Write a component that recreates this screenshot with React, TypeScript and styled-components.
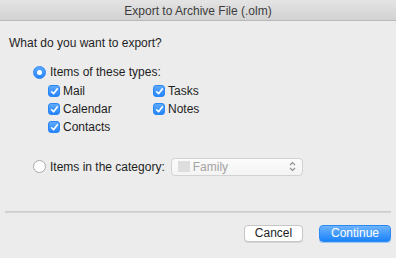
import React from "react";
import styled, { createGlobalStyle } from "styled-components";

const Global = createGlobalStyle`
  html, body { margin: 0; padding: 0; background: #ececec; }
  * { box-sizing: border-box; }
`;

const Window = styled.div`
  width: 396px;
  height: 258px;
  background: #ececec;
  font-family: "Liberation Sans", Arial, sans-serif;
  font-size: 12px;
  color: #1e1e1e;
  display: flex;
  flex-direction: column;
  overflow: hidden;
`;

const TitleBar = styled.div`
  height: 21px;
  flex: none;
  background: linear-gradient(#e4e4e4, #d2d2d2);
  border-bottom: 1px solid #b9b9b9;
  display: flex;
  align-items: center;
  justify-content: center;
  color: #3c3c3c;
  font-size: 12px;
  padding-top: 1px;
`;

const Body = styled.div`
  flex: 1;
  display: flex;
  flex-direction: column;
  padding: 15px 0 0 9px;
`;

const Question = styled.div`
  line-height: 15px;
  height: 15px;
`;

const Row = styled.div<{ $indent: number; $mt: number }>`
  display: flex;
  align-items: center;
  height: 16px;
  margin-left: ${(p) => p.$indent}px;
  margin-top: ${(p) => p.$mt}px;
  gap: 4px;
`;

const RadioDot = styled.span<{ $on?: boolean }>`
  width: 13px;
  height: 13px;
  border-radius: 50%;
  flex: none;
  display: flex;
  align-items: center;
  justify-content: center;
  background: ${(p) => (p.$on ? "linear-gradient(#5eaaff, #2684fb)" : "#ffffff")};
  border: 1px solid ${(p) => (p.$on ? "#2a86f5" : "#a9a9a9")};
  &::after {
    content: "";
    display: ${(p) => (p.$on ? "block" : "none")};
    width: 5px;
    height: 5px;
    border-radius: 50%;
    background: #ffffff;
  }
`;

const Columns = styled.div`
  display: flex;
  margin-left: 39px;
  margin-top: 3px;
`;

const Column = styled.div<{ $w: number }>`
  width: ${(p) => p.$w}px;
  display: flex;
  flex-direction: column;
  gap: 1.5px;
`;

const CheckRow = styled.div`
  display: flex;
  align-items: center;
  gap: 3px;
  height: 16.5px;
`;

const CheckBox = styled.span`
  width: 12px;
  height: 12px;
  border-radius: 3px;
  flex: none;
  background: linear-gradient(#5eaaff, #2684fb);
  border: 1px solid #2a86f5;
  display: flex;
  align-items: center;
  justify-content: center;
`;

const Popup = styled.div`
  margin-left: 2px;
  width: 132px;
  height: 18px;
  border: 1px solid #d2d2d2;
  border-radius: 4px;
  background: linear-gradient(#fbfbfb, #f3f3f3);
  display: flex;
  align-items: center;
  padding: 0 6px 0 6px;
  gap: 3px;
  color: #a3a3a3;
`;

const Swatch = styled.span`
  width: 12px;
  height: 11px;
  background: #dedede;
  flex: none;
`;

const PopupText = styled.span`
  flex: 1;
`;

const Separator = styled.div`
  margin: 36px 5px 0 -4px;
  height: 2px;
  background: linear-gradient(#c9c9c9, #d9d9d9);
`;

const Footer = styled.div`
  display: flex;
  justify-content: flex-end;
  gap: 16px;
  margin: 12px 5px 0 0;
`;

const Button = styled.button<{ $primary?: boolean }>`
  font-family: inherit;
  font-size: 12px;
  height: 17px;
  padding: 0;
  border-radius: 4px;
  width: ${(p) => (p.$primary ? 72 : 59)}px;
  color: ${(p) => (p.$primary ? "#ffffff" : "#1e1e1e")};
  background: ${(p) => (p.$primary ? "linear-gradient(#6cb3fb, #1c83fb)" : "#ffffff")};
  border: 1px solid ${(p) => (p.$primary ? "#2c89f4" : "#c6c6c6")};
  box-shadow: 0 1px 0 ${(p) => (p.$primary ? "#9cc6f3" : "#d6d6d6")};
  line-height: 15px;
`;

const Check = () => (
  <svg width="9" height="9" viewBox="0 0 9 9">
    <path d="M1.6 4.8 L3.6 6.8 L7.4 1.8" fill="none" stroke="#fff" strokeWidth="1.6" strokeLinecap="round" strokeLinejoin="round" />
  </svg>
);

const Chevrons = () => (
  <svg width="7" height="11" viewBox="0 0 7 11">
    <path d="M1 4 L3.5 1.5 L6 4 M1 7 L3.5 9.5 L6 7" fill="none" stroke="#8e8e8e" strokeWidth="1.1" />
  </svg>
);

const Item = ({ label }: { label: string }) => (
  <CheckRow>
    <CheckBox>
      <Check />
    </CheckBox>
    <span>{label}</span>
  </CheckRow>
);

export default function App() {
  return (
    <>
      <Global />
      <Window>
        <TitleBar>Export to Archive File (.olm)</TitleBar>
        <Body>
          <Question>What do you want to export?</Question>
          <Row $indent={24} $mt={13}>
            <RadioDot $on />
            <span>Items of these types:</span>
          </Row>
          <Columns>
            <Column $w={105}>
              <Item label="Mail" />
              <Item label="Calendar" />
              <Item label="Contacts" />
            </Column>
            <Column $w={80}>
              <Item label="Tasks" />
              <Item label="Notes" />
            </Column>
          </Columns>
          <Row $indent={24} $mt={23}>
            <RadioDot />
            <span>Items in the category:</span>
            <Popup>
              <Swatch />
              <PopupText>Family</PopupText>
              <Chevrons />
            </Popup>
          </Row>
          <Separator />
          <Footer>
            <Button>Cancel</Button>
            <Button $primary>Continue</Button>
          </Footer>
        </Body>
      </Window>
    </>
  );
}
